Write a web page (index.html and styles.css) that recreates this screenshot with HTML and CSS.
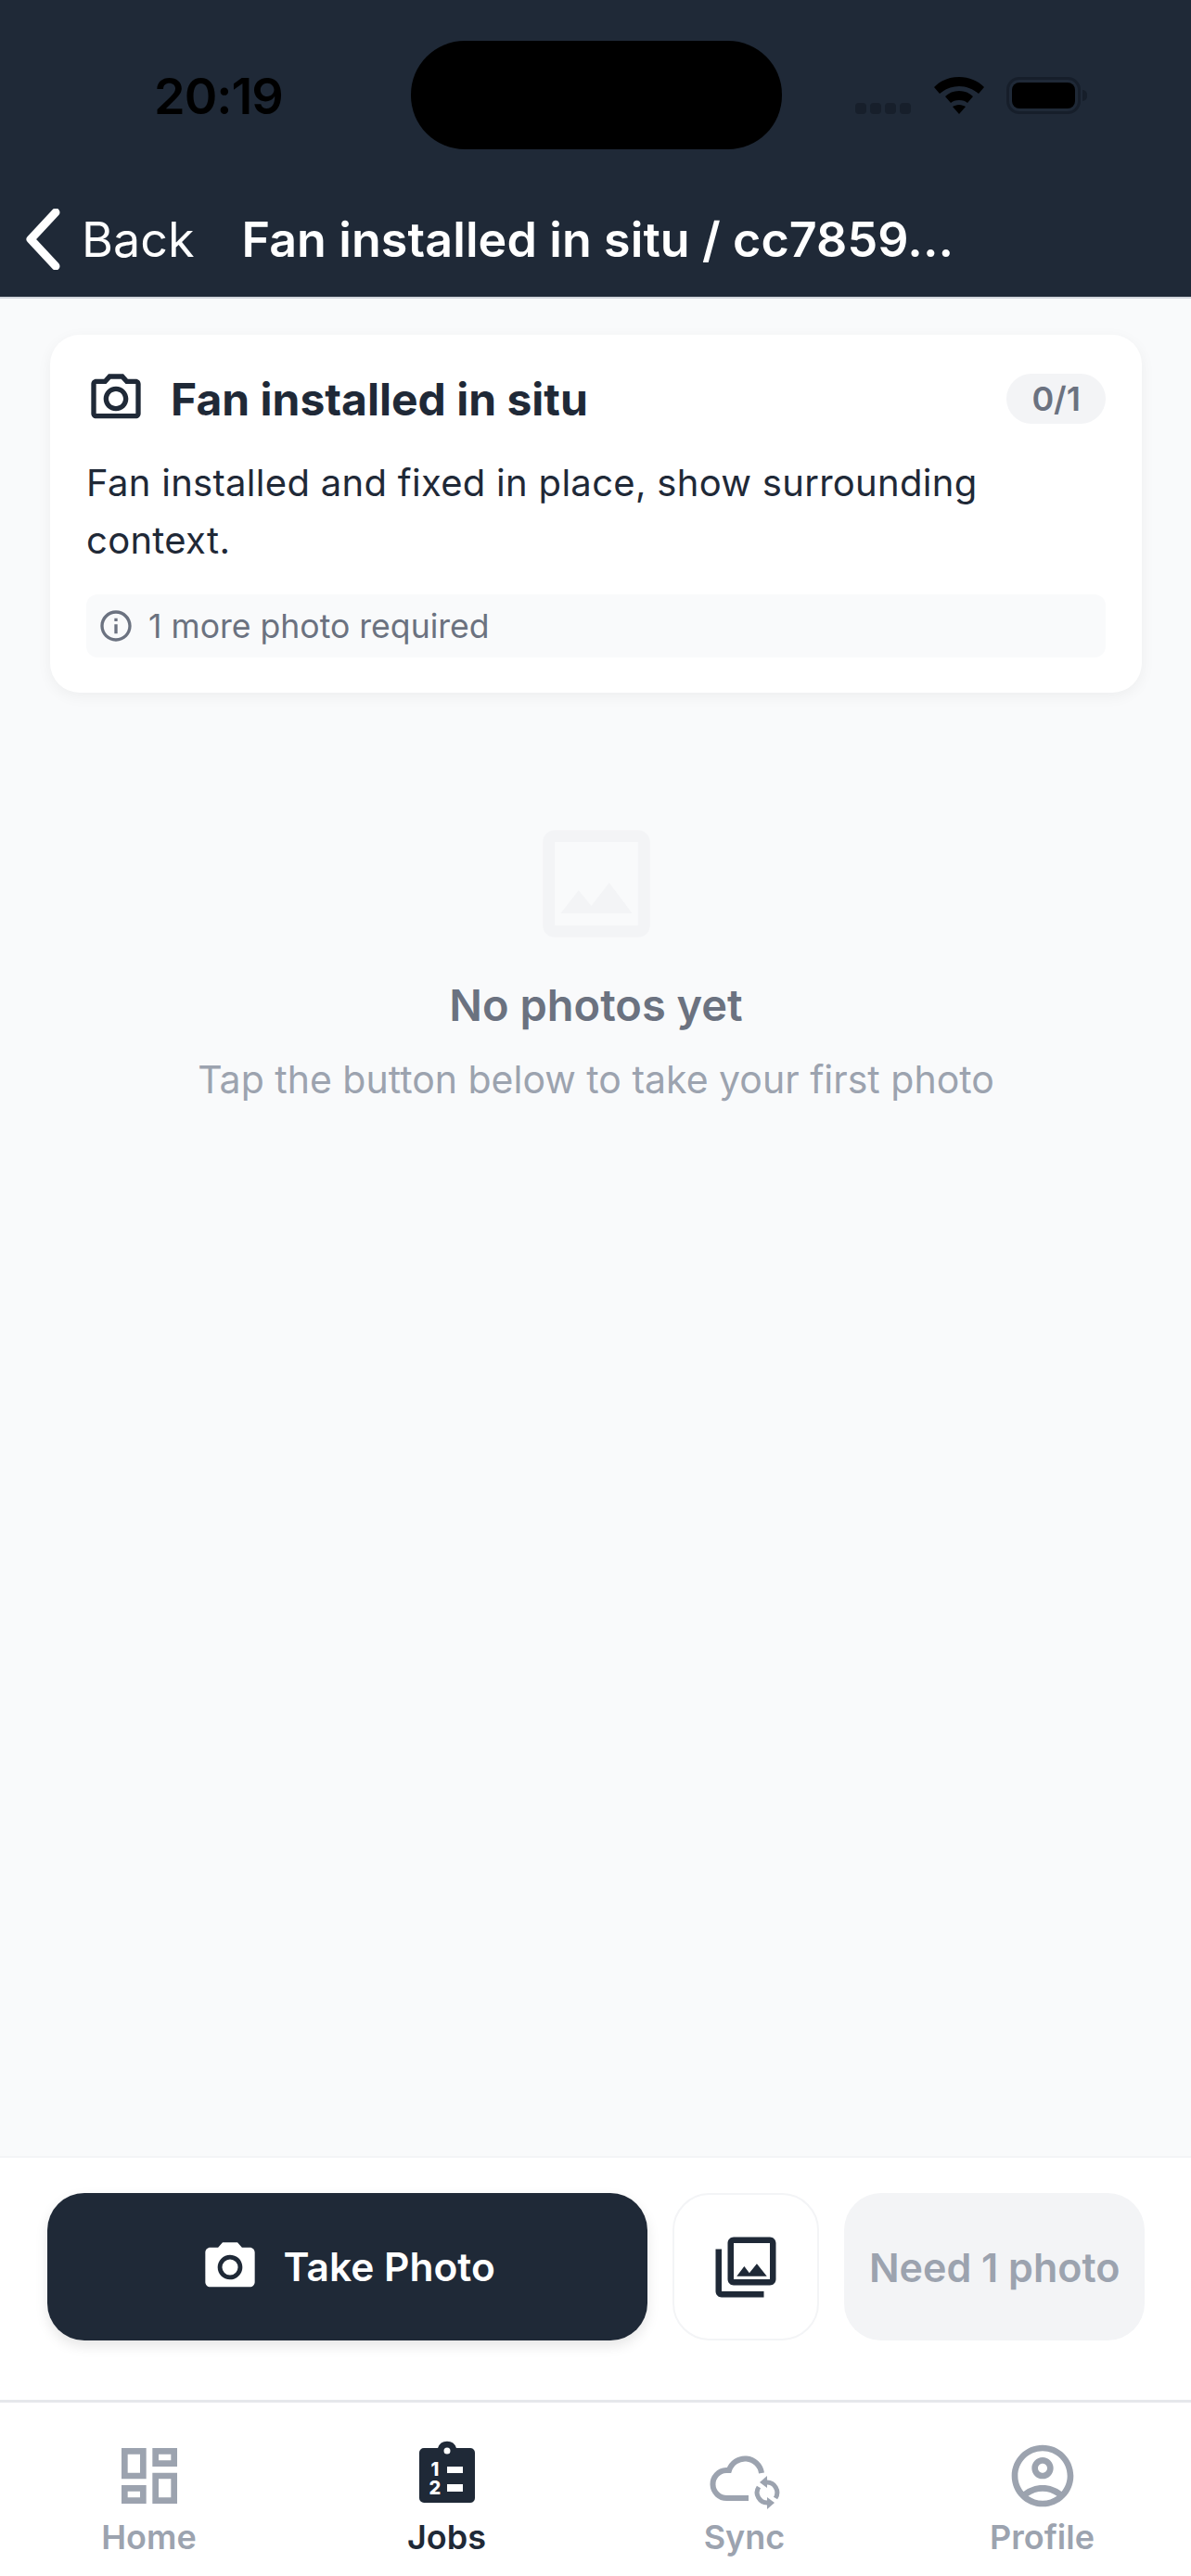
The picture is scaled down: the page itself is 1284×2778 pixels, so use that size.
FILE: index.html
```html
<!DOCTYPE html>
<html lang="en">
<head>
  <meta charset="UTF-8" />
  <meta name="viewport" content="width=device-width, initial-scale=1.0" />
  <title>Fan installed in situ</title>
  <link rel="stylesheet" href="styles.css">
</head>
<body>
  <div class="app">
    <header class="top">
      <div class="status">
        <div class="time">20:19</div>
        <div class="island"></div>
        <div class="status-icons">
          <div class="signal"><i></i><i></i><i></i><i></i></div>
          <svg class="wifi" viewBox="0 0 54 40">
            <path fill="#000" d="M27 0C16 0 7 4 0 11l6 7c6-5 13-8 21-8s15 3 21 8l6-7C47 4 38 0 27 0z"/>
            <path fill="#000" d="M27 15c-6 0-11 2-15 6l6 7c2-2 5-3 9-3s7 1 9 3l6-7c-4-4-9-6-15-6z"/>
            <path fill="#000" d="M27 30c-3 0-5 1-7 2l7 8 7-8c-2-1-4-2-7-2z"/>
          </svg>
          <div class="battery"><div class="battery-fill"></div></div>
          <div class="battery-nub"></div>
        </div>
      </div>
      <div class="nav">
        <svg class="chevron" viewBox="0 0 38 66"><path d="M33 4L6 33l27 29" fill="none" stroke="#fff" stroke-width="9" stroke-linecap="round" stroke-linejoin="round"/></svg>
        <span class="back">Back</span>
        <span class="nav-title">Fan installed in situ / cc7859...</span>
      </div>
    </header>

    <main class="content">
      <section class="card">
        <div class="card-head">
          <svg class="card-icon" viewBox="0 0 24 24"><path fill="#1f2937" d="M14.12 4l1.83 2H20v12H4V6h4.05l1.83-2h4.24M15 2H9L7.17 4H4c-1.1 0-2 .9-2 2v12c0 1.1.9 2 2 2h16c1.1 0 2-.9 2-2V6c0-1.1-.9-2-2-2h-3.17L15 2zm-3 7c1.65 0 3 1.35 3 3s-1.35 3-3 3-3-1.35-3-3 1.35-3 3-3m0-2c-2.76 0-5 2.24-5 5s2.24 5 5 5 5-2.24 5-5-2.24-5-5-5z"/></svg>
          <h2 class="card-title">Fan installed in situ</h2>
          <span class="badge">0/1</span>
        </div>
        <p class="card-desc">Fan installed and fixed in place, show surrounding context.</p>
        <div class="hint">
          <svg class="hint-icon" viewBox="0 0 24 24"><path fill="#6b7280" d="M11 7h2v2h-2zm0 4h2v6h-2zm1-9C6.48 2 2 6.48 2 12s4.48 10 10 10 10-4.48 10-10S17.52 2 12 2zm0 18c-4.41 0-8-3.59-8-8s3.59-8 8-8 8 3.59 8 8-3.59 8-8 8z"/></svg>
          <span>1 more photo required</span>
        </div>
      </section>

      <div class="empty">
        <svg class="empty-icon" viewBox="0 0 24 24"><path fill="#f3f4f6" d="M19 5v14H5V5h14m0-2H5c-1.1 0-2 .9-2 2v14c0 1.1.9 2 2 2h14c1.1 0 2-.9 2-2V5c0-1.1-.9-2-2-2zm-4.86 8.86l-3 3.87L9 13.14 6 17h12l-3.86-5.14z"/></svg>
        <div class="empty-title">No photos yet</div>
        <div class="empty-sub">Tap the button below to take your first photo</div>
      </div>
    </main>

    <div class="actions">
      <button class="btn btn-primary">
        <svg class="btn-icon" viewBox="0 0 24 24"><circle fill="#fff" cx="12" cy="12" r="3.2"/><path fill="#fff" d="M9 2L7.17 4H4c-1.1 0-2 .9-2 2v12c0 1.1.9 2 2 2h16c1.1 0 2-.9 2-2V6c0-1.1-.9-2-2-2h-3.17L15 2H9zm3 15c-2.76 0-5-2.24-5-5s2.24-5 5-5 5 2.24 5 5-2.24 5-5 5z"/></svg>
        Take Photo
      </button>
      <button class="btn btn-gallery">
        <svg class="gallery-icon" viewBox="0 0 24 24"><path fill="#1f2937" d="M20 4v12H8V4h12m0-2H8c-1.1 0-2 .9-2 2v12c0 1.1.9 2 2 2h12c1.1 0 2-.9 2-2V4c0-1.1-.9-2-2-2zm-8.5 9.67l1.69 2.26 2.48-3.1L19 15H9zM2 6v14c0 1.1.9 2 2 2h14v-2H4V6H2z"/></svg>
      </button>
      <button class="btn btn-disabled">Need 1 photo</button>
    </div>

    <nav class="tabs">
      <div class="tab">
        <svg class="tab-icon" viewBox="0 0 24 24"><path fill="#9ca3af" d="M19 5v2h-4V5h4M9 5v6H5V5h4m10 8v6h-4v-6h4M9 17v2H5v-2h4M21 3h-8v6h8V3zM11 3H3v10h8V3zm10 8h-8v10h8V11zm-10 4H3v6h8v-6z"/></svg>
        <span>Home</span>
      </div>
      <div class="tab tab-active">
        <svg class="tab-icon" viewBox="0 0 80 80">
          <path fill="#1f2937" fill-rule="evenodd" d="M30 10a10.500 10.500 0 0 1 20 0h15a5 5 0 0 1 5 5v49a5 5 0 0 1-5 5H15a5 5 0 0 1-5-5V15a5 5 0 0 1 5-5zM40 9.500a3.500 3.500 0 1 0 0 7 3.500 3.500 0 0 0 0-7zM40 30v7h17v-7zM40 49v8h17v-8z"/>
          <text class="tab-num" x="27" y="40" text-anchor="middle">1</text>
          <text class="tab-num" x="27" y="60" text-anchor="middle">2</text>
        </svg>
        <span>Jobs</span>
      </div>
      <div class="tab">
        <svg class="tab-icon" viewBox="0 0 80 80">
          <path fill="none" stroke="#9ca3af" stroke-width="6" d="M44 64H21a15 15 0 0 1-1-30h3a18 18 0 0 1 35 3"/>
          <path fill="none" stroke="#9ca3af" stroke-width="5" d="M63 47a11 11 0 0 1 10 17"/>
          <path fill="#9ca3af" d="M56 47l8-7v13z"/>
          <path fill="none" stroke="#9ca3af" stroke-width="5" d="M65 69a11 11 0 0 1-10-17"/>
          <path fill="#9ca3af" d="M72 69l-8 7V63z"/>
        </svg>
        <span>Sync</span>
      </div>
      <div class="tab">
        <svg class="tab-icon" viewBox="0 0 24 24"><path fill="#9ca3af" d="M12 2C6.48 2 2 6.48 2 12s4.48 10 10 10 10-4.48 10-10S17.52 2 12 2zM7.350 18.500C8.660 17.560 10.260 17 12 17s3.340.56 4.650 1.500c-1.310.94-2.910 1.500-4.650 1.500s-3.340-.56-4.650-1.500zm10.790-1.380C16.450 15.800 14.320 15 12 15s-4.450.8-6.140 2.120C4.700 15.730 4 13.950 4 12c0-4.420 3.580-8 8-8s8 3.580 8 8c0 1.950-.7 3.730-1.860 5.120z"/><path fill="#9ca3af" d="M12 6c-1.930 0-3.500 1.570-3.500 3.500S10.070 13 12 13s3.500-1.570 3.500-3.500S13.930 6 12 6zm0 5c-.83 0-1.500-.67-1.500-1.500S11.170 8 12 8s1.500.67 1.500 1.500S12.830 11 12 11z"/></svg>
        <span>Profile</span>
      </div>
    </nav>
  </div>
</body>
</html>
```
FILE: styles.css
```css
* {
  box-sizing: border-box;
}
body {
  margin: 0;
  font-family: Inter, "Noto Sans", sans-serif;
  background: #f9fafb;
  color: #1f2937;
}
.app {
  display: flex;
  flex-direction: column;
  height: 2778px;
}

/* header */
.top {
  height: 322px;
  background: #1f2937;
  border-bottom: 2px solid #d1d5db;
  flex-shrink: 0;
}
.status {
  display: flex;
  align-items: flex-start;
  height: 213px;
  padding-top: 44px;
}
.time {
  width: 443px;
  padding: 33px 0 0 166px;
  font-size: 54px;
  line-height: 54px;
  font-weight: 600;
  letter-spacing: -1px;
  color: #000;
}
.island {
  width: 400px;
  height: 117px;
  background: #000;
  border-radius: 58px;
}
.status-icons {
  display: flex;
  align-items: flex-end;
  margin: 39px 0 0 79px;
  height: 40px;
}
.signal {
  display: flex;
  gap: 4px;
  width: 66px;
}
.signal i {
  width: 12px;
  height: 12px;
  border-radius: 4px;
  background: #171f2b;
}
.wifi {
  width: 54px;
  height: 40px;
  margin-left: 19px;
}
.battery {
  width: 80px;
  height: 40px;
  margin-left: 24px;
  padding: 3px;
  border: 3px solid #161e2a;
  border-radius: 14px;
}
.battery-fill {
  height: 100%;
  background: #000;
  border-radius: 8px;
}
.battery-nub {
  align-self: center;
  width: 5px;
  height: 12px;
  margin-left: 2px;
  background: #161e2a;
  border-radius: 0 6px 6px 0;
}
.nav {
  display: flex;
  align-items: center;
  height: 66px;
  padding-left: 27px;
  margin-top: 12px;
  color: #fff;
}
.chevron {
  width: 38px;
  height: 66px;
}
.back {
  margin-left: 23px;
  font-size: 52px;
}
.nav-title {
  margin-left: 51px;
  font-size: 52px;
  font-weight: 600;
  letter-spacing: 0.1px;
}

/* main */
.content {
  flex: 1;
  padding: 39px 53px 0 54px;
}
.card {
  height: 386px;
  padding: 38px 39px 0;
  background: #fff;
  border-radius: 32px;
  box-shadow: 0 4px 16px rgba(0, 0, 0, 0.05);
}
.card-head {
  display: flex;
  align-items: center;
  height: 62px;
}
.card-icon {
  width: 64px;
  height: 64px;
}
.card-title {
  flex: 1;
  margin: 0 0 0 27px;
  font-size: 48px;
  font-weight: 700;
}
.badge {
  padding: 6px 27px;
  background: #f3f4f6;
  border-radius: 27px;
  font-size: 36px;
  line-height: 42px;
  font-weight: 600;
  color: #6b7280;
}
.card-desc {
  margin: 29px 0 0;
  font-size: 40px;
  line-height: 62px;
  letter-spacing: 0.3px;
}
.hint {
  display: flex;
  align-items: center;
  gap: 15px;
  height: 68px;
  margin-top: 27px;
  padding-left: 12px;
  background: #f9fafb;
  border-radius: 12px;
  font-size: 35.6px;
  color: #6b7280;
}
.hint-icon {
  width: 40px;
  height: 40px;
}
.empty {
  display: flex;
  flex-direction: column;
  align-items: center;
  margin-top: 129px;
}
.empty-icon {
  width: 154px;
  height: 154px;
}
.empty-title {
  margin-top: 27px;
  font-size: 47px;
  line-height: 54px;
  font-weight: 600;
  color: #6b7280;
}
.empty-sub {
  margin-top: 26px;
  font-size: 41px;
  line-height: 54px;
  color: #9ca3af;
}

/* bottom buttons */
.actions {
  display: flex;
  gap: 27px;
  height: 263px;
  padding: 38px 50px 0 51px;
  background: #fff;
  border-top: 2px solid #f3f4f6;
  flex-shrink: 0;
}
.btn {
  height: 159px;
  border: 0;
  border-radius: 40px;
  font-family: inherit;
  font-size: 42.500px;
  font-weight: 600;
}
.btn-primary {
  display: flex;
  align-items: center;
  justify-content: center;
  gap: 26px;
  width: 648px;
  background: #1f2937;
  color: #fff;
  box-shadow: 0 6px 14px rgba(0, 0, 0, 0.1);
}
.btn-icon {
  width: 64px;
  height: 64px;
}
.btn-gallery {
  display: flex;
  align-items: center;
  justify-content: center;
  width: 158px;
  background: #fff;
  border: 2px solid #f3f4f6;
}
.gallery-icon {
  width: 78px;
  height: 78px;
}
.btn-disabled {
  width: 324px;
  background: #f3f4f6;
  color: #9ca3af;
  font-size: 43px;
}

/* tab bar */
.tabs {
  display: grid;
  grid-template-columns: repeat(4, 321px);
  height: 190px;
  padding-top: 39px;
  background: #fff;
  border-top: 3px solid #e5e7eb;
  flex-shrink: 0;
}
.tab {
  display: flex;
  flex-direction: column;
  align-items: center;
  gap: 5px;
  font-size: 36px;
  line-height: 42px;
  font-weight: 600;
  color: #9ca3af;
}
.tab-active {
  color: #1f2937;
}
.tab-icon {
  width: 80px;
  height: 80px;
}
.tab-num {
  font-size: 20px;
  font-weight: 800;
  fill: #fff;
}
```
